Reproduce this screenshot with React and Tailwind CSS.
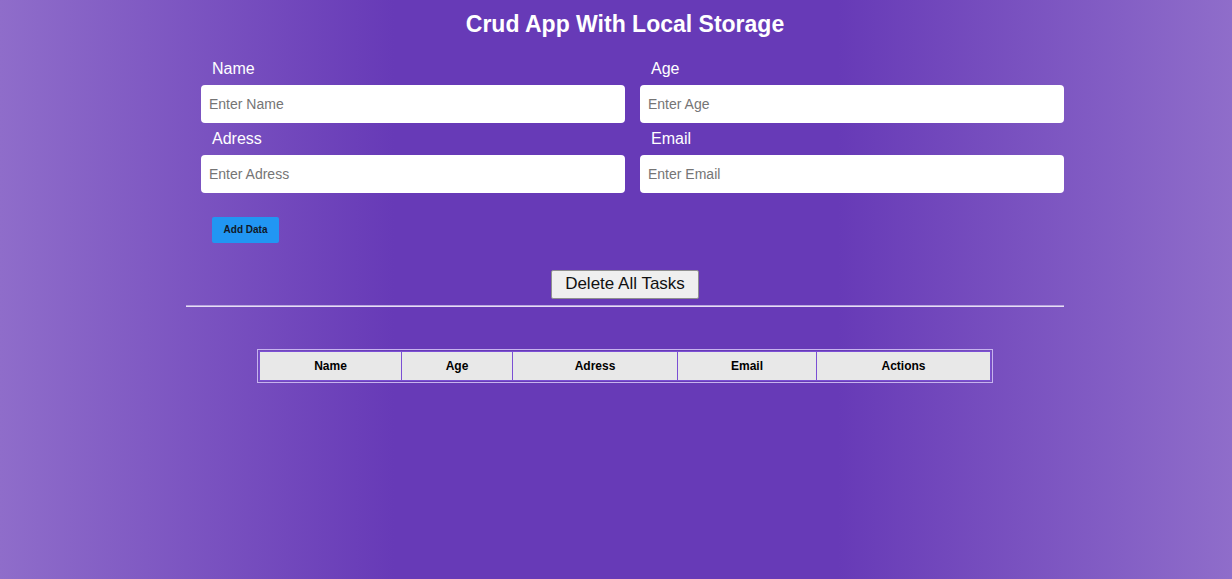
import { useState } from 'react'

const fields = [
    { key: 'name', label: 'Name', placeholder: 'Enter Name' },
    { key: 'age', label: 'Age', placeholder: 'Enter Age' },
    { key: 'adress', label: 'Adress', placeholder: 'Enter Adress' },
    { key: 'email', label: 'Email', placeholder: 'Enter Email' },
]

const columns = [
    { label: 'Name', w: 'w-[142px]' },
    { label: 'Age', w: 'w-[111px]' },
    { label: 'Adress', w: 'w-[165px]' },
    { label: 'Email', w: 'w-[139px]' },
    { label: 'Actions', w: 'w-[174px]' },
]

export default function App() {
    const [form, setForm] = useState({ name: '', age: '', adress: '', email: '' })

    return (
        <div className="min-h-[579px] w-full bg-[linear-gradient(90deg,#8f6dca_0%,#673ab7_32%,#673ab7_68%,#8f6dca_100%)] font-['Liberation_Sans',Arial,sans-serif] flex justify-center pl-[18px]">
            <div className="w-[878px] flex flex-col">
                <h1 className="pt-[10px] text-center text-[23px] leading-[28px] font-bold text-white">
                    Crud App With Local Storage
                </h1>

                {/* Form */}
                <div className="pl-[15px] mt-[22px] grid grid-cols-2 gap-x-[15px] gap-y-[7px]">
                    {fields.map((f) => (
                        <div key={f.key} className="flex flex-col">
                            <label className="pl-[11px] text-[16px] leading-[18px] text-white mb-[7px]">{f.label}</label>
                            <input
                                value={form[f.key]}
                                onChange={(e) => setForm({ ...form, [f.key]: e.target.value })}
                                placeholder={f.placeholder}
                                className="h-[38px] w-full rounded-[4px] bg-white px-[8px] text-[14px] text-[#222] placeholder:text-[#757575] outline-none"
                            />
                        </div>
                    ))}
                </div>

                <div className="pl-[26px] mt-[23px]">
                    <button className="h-[26px] w-[67px] rounded-[2px] bg-[#2196f3] text-[10px] font-bold text-[#111827]">
                        Add Data
                    </button>
                </div>

                <div className="mt-[27px] flex justify-center">
                    <button className="h-[29px] w-[148px] rounded-[2px] border border-[#8f8f8f] bg-[#efefef] text-[17px] leading-[20px] text-[#111]">
                        Delete All Tasks
                    </button>
                </div>

                <div className="mt-[6px] h-0 border-t border-b border-t-[#b9a6df] border-b-[#e6ddf5]" />

                <div className="mt-[42px] flex justify-center">
                    <div className="border border-[#c6b3ee] p-px">
                        <table className="border-collapse">
                            <thead>
                                <tr>
                                    {columns.map((c) => (
                                        <th
                                            key={c.label}
                                            className={`${c.w} h-[29px] border border-[#7b4fd4] bg-[#e8e8e8] text-[12px] font-bold text-black`}
                                        >
                                            {c.label}
                                        </th>
                                    ))}
                                </tr>
                            </thead>
                            <tbody />
                        </table>
                    </div>
                </div>
            </div>
        </div>
    )
}
